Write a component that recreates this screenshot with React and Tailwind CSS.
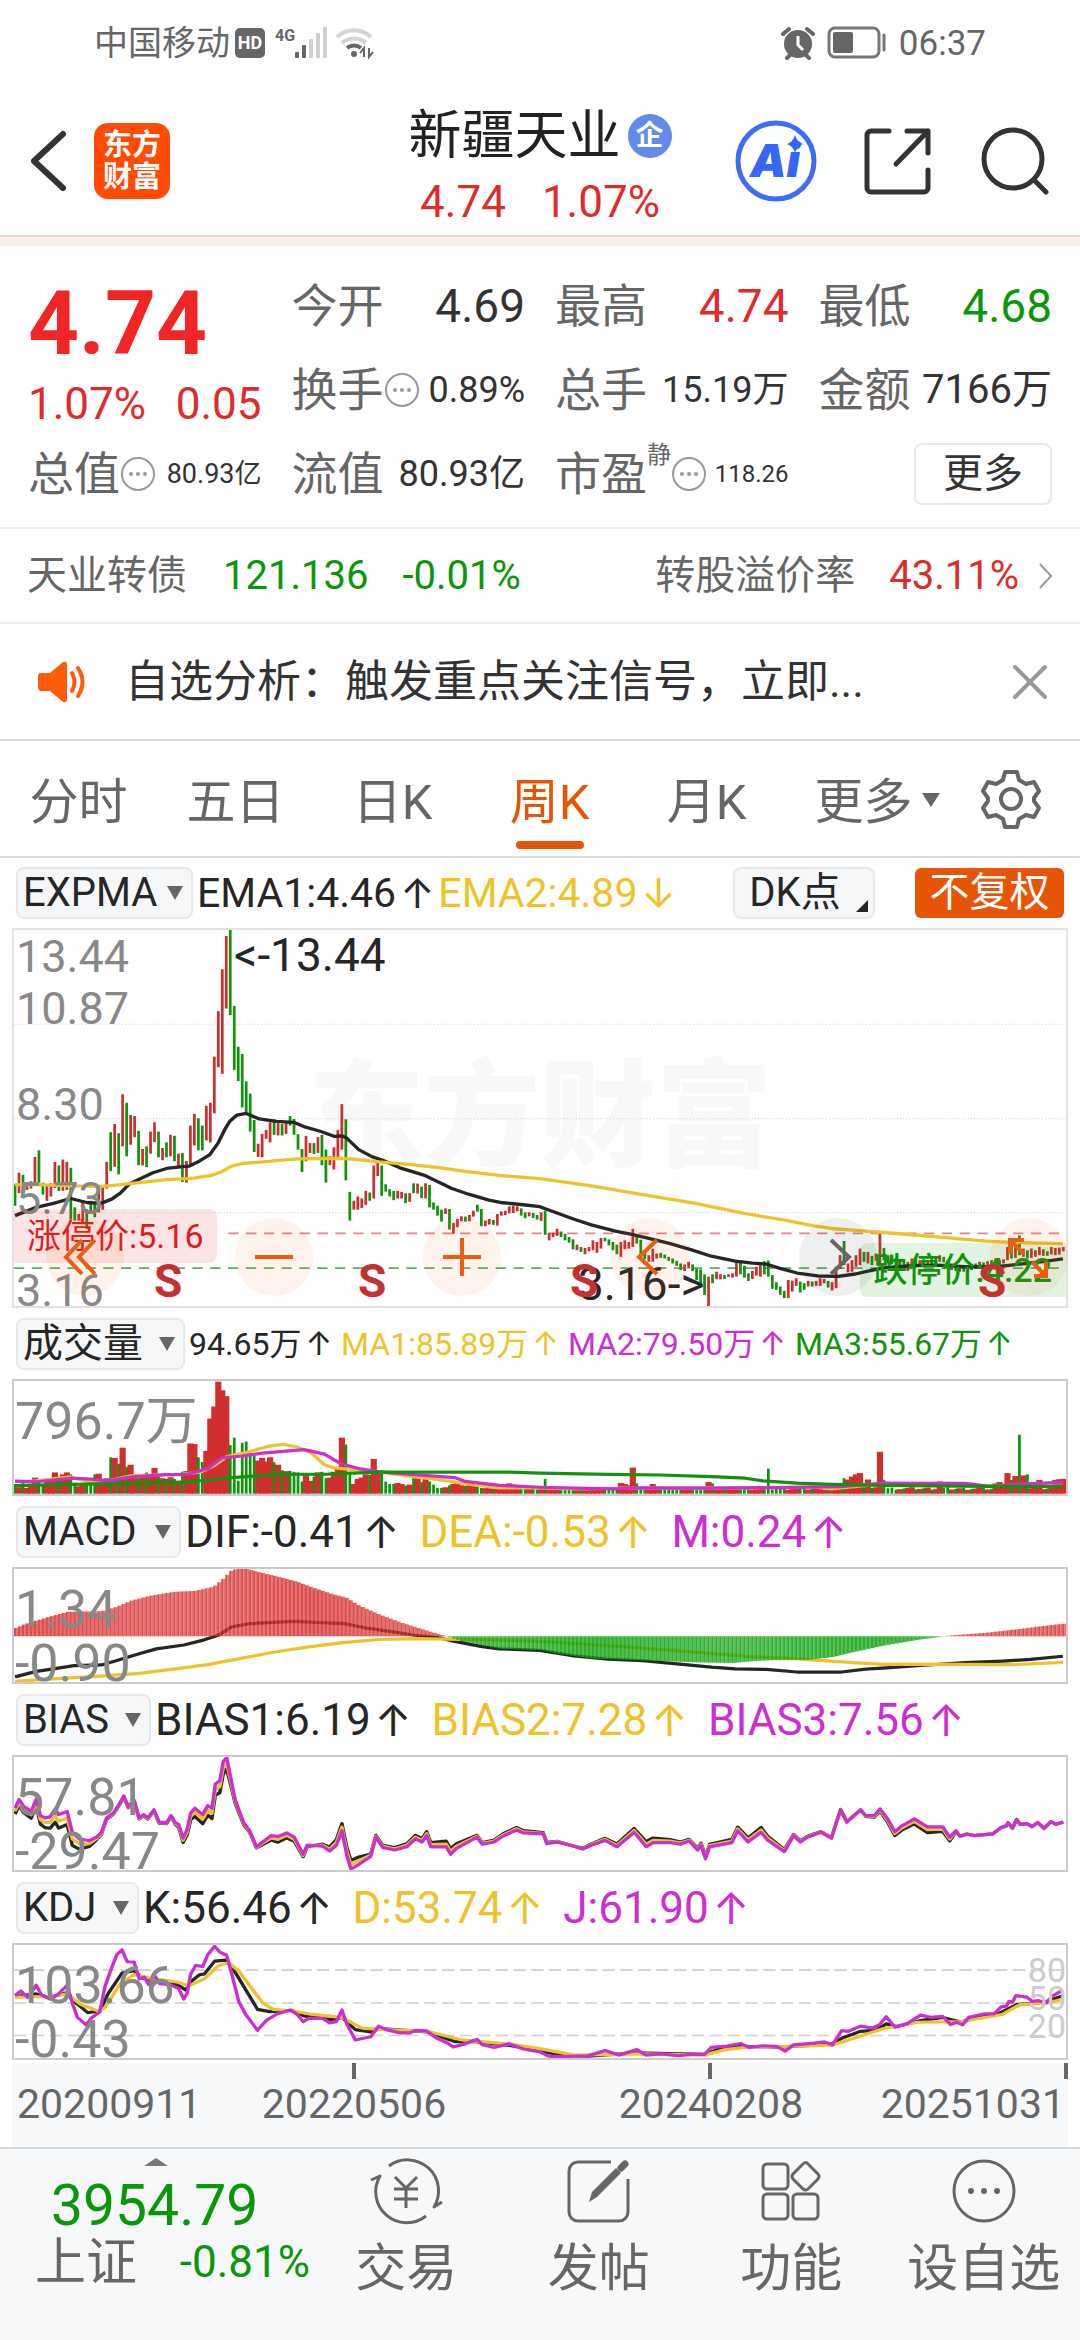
import { useState } from "react";
import clsx from "clsx";

const CANDLES = `795-860g 760-822r 766-822g 790-812r 786-808r 712-790r 692-790g 790-826g 800-845r 792-832r
727-806r 738-815g 720-815r 727-812r 745-900g 865-905g 885-905r 850-905r 870-930g 845-885g
850-895g 805-880r 800-872r 727-808r 637-755g 612-742r 640-765g 522-680r 548-710g 585-675r
588-652r 633-737g 688-738r 680-743g 635-702r 607-667r 635-713g 685-722r 668-713g 645-710r
648-725g 702-740r 700-788g 724-790r 617-735r 582-677r 595-692g 617-692g 557-662r 548-668r
408-580r 270-440r 143-460r 42-262r 24-282g 254-448g 378-482g 400-562g 483-582g 520-635g
600-697g 672-712r 642-713r 630-657r 607-668r 598-645g 610-647r 612-647g 605-642r 588-617g
597-645g 643-690g 688-758g 648-725r 670-700r 670-703g 652-700r 645-737g 690-790g 710-737r
683-750r 630-715r 552-690r 598-783g 818-905g 845-872r 832-872r 838-867r 815-857r 820-845g
738-838r 730-770r 738-830g 795-817g 810-832g 815-843g 815-838r 818-838r 822-852g 822-848r
792-822g 793-823r 802-837g 792-838r 797-865g 850-872g 860-890g 872-908g 868-885r 870-932g
912-945r 900-925r 892-907r 893-908g 888-907r 875-893r 857-878g 870-922g 905-922r 900-917r
903-918g 885-920r 877-890r 875-888r 862-883r 860-882r 862-877r 868-890g 880-898g 880-892r
882-897g 888-902g 880-906r 875-948g 942-965r 942-955r 930-952r 938-955g 945-965g 955-972g
962-992g 978-995r 985-1000g 988-1007r 985-998r 965-995r 970-1003r 958-990r 957-968g 962-980g
970-995g 978-1007g 970-1015r 965-992r 970-990r 930-985r 950-975g 963-1015g 1000-1022g 1010-1030r
990-1030r 1005-1020r 1003-1018g 1008-1020g 1015-1027g 1020-1035g 1027-1042g 1035-1055g 1038-1058r 1030-1050r
1038-1058g 1050-1085g 1053-1095g 1068-1130g 1075-1165r 1068-1095g 1060-1083r 1068-1083r 1070-1082g 1068-1076r
1065-1078r 1030-1075r 1033-1068g 1042-1078g 1065-1088g 1058-1082r 1045-1072r 1040-1075r 1028-1068g 1026-1075g
1070-1112g 1092-1115g 1105-1130g 1118-1140g 1085-1140r 1087-1120r 1080-1103r 1090-1123g 1095-1115g 1088-1105r
1090-1105g 1088-1103r 1080-1103r 1082-1095r 1088-1108g 1092-1117r 1045-1110r 1010-1052r 967-1040g 1035-1062r
1025-1060r 1010-1045r 990-1040r 1000-1030g 1000-1035r 1012-1040g 1005-1027r 943-1045r 988-1025g 1010-1035g
1012-1038g 1018-1045g 1025-1050r 1028-1055g 1030-1058r 1020-1040r 1022-1045g 1025-1045r 1022-1040g 1025-1045r
1020-1042g 1015-1035r 1010-1030r 1015-1032g 1025-1045g 1035-1055r 1040-1058g 1042-1060r 1045-1060g 1040-1055r
1038-1055g 1035-1052r 1030-1050r 1032-1048g 1028-1045r 1025-1043g 1020-1040r 1025-1040r 1022-1035r 985-1025r
980-1020g 985-1018r 950-1010g 990-1015r 995-1020g 990-1018r 995-1015r 985-1010r 992-1012r 998-1012g
985-1008r 988-1010r 987-1008r 985-998r`
  .split(/\s+/)
  .map((item) => {
    const [high, low] = item.slice(0, -1).split("-").map(Number);
    return { high, low, up: item.endsWith("r") };
  });

const VOLUMES = [
  528, 538, 525, 540, 535, 508, 515, 530, 520, 512, 492, 505, 498, 492, 498, 530, 535, 528, 520, 515,
  498, 496, 515, 510, 445, 447, 465, 415, 475, 468, 500, 510, 500, 492, 498, 478, 500, 510, 512, 507,
  512, 525, 490, 488, 402, 404, 445, 460, 425, 325, 287, 210, 237, 255, 407, 384, 518, 400, 396, 432,
  440, 455, 447, 458, 445, 460, 468, 485, 488, 487, 490, 492, 520, 500, 518, 505, 492, 490, 510, 508,
  490, 480, 384, 405, 490, 528, 512, 508, 498, 500, 450, 490, 485, 520, 528, 528, 525, 528, 533, 530,
  508, 510, 522, 503, 520, 530, 540, 540, 538, 532, 528, 525, 532, 534, 530, 533, 535, 540, 541, 541,
  543, 538, 536, 534, 526, 530, 535, 540, 543, 543, 543, 545, 542, 512,
];

// late spikes, the other weeks are almost flat
const VOLUME_SPIKES = {
  152: 525, 153: 528, 154: 532, 155: 477, 156: 526, 160: 528, 174: 522, 175: 526, 189: 480,
  208: 510, 209: 514, 210: 505, 211: 498, 212: 494, 213: 530, 214: 514, 217: 428, 218: 515,
  232: 520, 246: 526, 247: 522, 248: 530, 249: 494, 250: 515, 251: 503, 252: 375, 253: 501,
  254: 498, 257: 515, 261: 515, 262: 513, 263: 512,
};

const MACD_BARS = [
  [38, 955], [60, 945], [130, 922], [190, 905], [290, 903], [330, 890], [375, 870], [430, 855],
  [500, 843], [560, 840], [615, 827], [640, 805], [665, 778], [680, 772], [715, 772], [740, 780],
  [800, 795], [860, 812], [900, 828], [960, 850], [1000, 860], [1040, 886], [1100, 914],
  [1160, 938], [1220, 958], [1270, 974], [1295, 981], [1340, 996], [1450, 1020], [1568, 1024],
  [1618, 1035], [1718, 1050], [1868, 1056], [2018, 1062], [2128, 1064], [2188, 1058], [2268, 1054],
  [2348, 1054], [2418, 1046], [2468, 1033], [2568, 1010], [2668, 992], [2728, 983], [2758, 979],
  [2868, 970], [2968, 958], [3018, 951], [3094, 942],
];

const BIAS = [
  [38, 325], [50, 298], [62, 318], [85, 335], [100, 297], [112, 348], [125, 355], [140, 352],
  [155, 328], [165, 345], [190, 335], [205, 400], [225, 420], [255, 426], [275, 415], [290, 400],
  [305, 355], [325, 340], [340, 315], [355, 287], [368, 320], [385, 300], [400, 355], [412, 345],
  [425, 355], [443, 330], [458, 368], [480, 370], [493, 348], [505, 370], [515, 375], [528, 418],
  [540, 390], [550, 340], [562, 325], [585, 345], [600, 317], [612, 325], [622, 250], [635, 240],
  [645, 180], [655, 168], [665, 220], [680, 300], [705, 370], [722, 395], [742, 445], [760, 430],
  [785, 410], [805, 413], [830, 402], [852, 415], [878, 468], [890, 440], [935, 443], [955, 458],
  [975, 440], [991, 395], [1005, 470], [1017, 514], [1040, 500], [1075, 475], [1090, 415],
  [1110, 447], [1145, 455], [1180, 445], [1205, 420], [1225, 430], [1238, 410], [1250, 445],
  [1295, 445], [1308, 468], [1325, 450], [1385, 415], [1400, 437], [1435, 430], [1460, 412],
  [1500, 393], [1520, 402], [1578, 405], [1588, 435], [1618, 430], [1658, 440], [1693, 452],
  [1718, 440], [1758, 425], [1793, 445], [1843, 400], [1878, 445], [1898, 432], [1948, 432],
  [1978, 437], [2003, 427], [2028, 455], [2038, 440], [2051, 482], [2063, 445], [2128, 432],
  [2145, 395], [2175, 430], [2213, 400], [2233, 425], [2281, 460], [2308, 410], [2328, 430],
  [2348, 415], [2388, 400], [2418, 418], [2445, 330], [2463, 368], [2503, 330], [2518, 348],
  [2543, 348], [2560, 327], [2583, 360], [2603, 398], [2623, 380], [2660, 358], [2698, 383],
  [2743, 383], [2763, 415], [2781, 395], [2793, 412], [2813, 405], [2833, 410], [2888, 405],
  [2913, 385], [2928, 380], [2933, 370], [2946, 387], [2958, 360], [2968, 375], [2988, 373],
  [3003, 382], [3020, 370], [3038, 388], [3058, 367], [3073, 375], [3094, 368],
];

// distance of the short BIAS line from the long one
const BIAS_SPREAD = [
  [38, 18], [100, 22], [160, 42], [210, 40], [270, 10], [300, 4], [500, 3], [560, 25], [600, 30],
  [650, 40], [680, 10], [740, 3], [800, 18], [860, 12], [930, -5], [991, -22], [1017, -27],
  [1050, -22], [1080, -5], [1240, -12], [1300, -18], [1390, -5], [1500, -8], [1660, 0],
  [1843, -12], [1880, -16], [2000, -5], [2145, -11], [2213, -15], [2300, -4], [2500, 0],
  [2600, 12], [2700, 18], [2760, 13], [2790, 0], [3094, 0],
];

function interpolate(points, x) {
  const end = points.findIndex((p) => p[0] >= x);
  if (end <= 0) return points[end === 0 ? 0 : points.length - 1][1];
  const [x0, y0] = points[end - 1];
  const [x1, y1] = points[end];
  return y0 + ((y1 - y0) * (x - x0)) / (x1 - x0);
}

const barX = (i) => 38 + i * 11.62;

const biasLine = (ratio) =>
  BIAS.map(([x, y]) => `${x},${y + interpolate(BIAS_SPREAD, x) * ratio}`).join(" ");

const RED = "#cb3030";
const GREEN = "#12930f";
const YELLOW = "#eec22a";
const PURPLE = "#cb2fcf";
const BLACK = "#262626";

function Line({ points, color, width = 10 }) {
  return <polyline points={points} fill="none" stroke={color} strokeWidth={width} strokeLinejoin="round" />;
}

function Plot({ viewBox, children }) {
  return (
    <svg viewBox={viewBox} preserveAspectRatio="none" className="absolute inset-0 w-full h-full" aria-hidden="true">
      {children}
    </svg>
  );
}

function More({ size = 36 }) {
  return (
    <svg width={size} height={size} viewBox="0 0 36 36" fill="none" stroke="#999" strokeWidth="2">
      <circle cx="18" cy="18" r="16" />
      <g fill="#999" stroke="none">
        <circle cx="11" cy="18" r="2" />
        <circle cx="18" cy="18" r="2" />
        <circle cx="25" cy="18" r="2" />
      </g>
    </svg>
  );
}

function StatusBar() {
  return (
    <div className="flex items-center justify-between h-[86px] px-[94px] text-[#666]">
      <div className="flex items-center">
        <span className="text-[34px]">中国移动</span>
        <span className="ml-[5px] w-[30px] h-[30px] rounded-[5px] bg-[#666] text-white text-[18px] font-bold flex items-center justify-center">
          HD
        </span>
        <span className="ml-[10px] self-start text-[16px] leading-[20px] font-bold">4G</span>
        <svg width="34" height="32" viewBox="0 0 34 32" fill="#666">
          <rect x="0" y="25" width="4" height="6" rx="1" />
          <rect x="7" y="18" width="4" height="13" rx="1" />
          <g fill="#d0d0d0">
            <rect x="14" y="12" width="4" height="19" rx="1" />
            <rect x="21" y="6" width="4" height="25" rx="1" />
            <rect x="28" y="0" width="4" height="31" rx="1" />
          </g>
        </svg>
        <svg width="40" height="34" viewBox="0 0 40 34" fill="none" strokeWidth="4" className="ml-[6px]">
          <path d="M2 11a25 25 0 0 1 34 0" stroke="#d4d4d4" />
          <path d="M7 17a18 18 0 0 1 24 0" stroke="#d4d4d4" />
          <path d="M12 22a11 11 0 0 1 14 0" stroke="#666" />
          <circle cx="19" cy="28" r="3" fill="#666" />
          <path d="M29 31v-9l-4 5M34 22v9l4-5" stroke="#666" strokeWidth="2" />
        </svg>
      </div>
      <div className="flex items-center">
        <svg width="34" height="34" viewBox="0 0 34 34" fill="#666">
          <ellipse cx="17" cy="18" rx="14" ry="14" />
          <path d="M2 8l6-5M32 8l-6-5M6 32l4-4M28 32l-4-4" stroke="#666" strokeWidth="4" strokeLinecap="round" />
          <path d="M17 10v9l5 5" stroke="#fff" strokeWidth="3" fill="none" />
        </svg>
        <svg width="60" height="34" viewBox="0 0 60 34" fill="none" className="ml-3">
          <rect x="2" y="2" width="50" height="29" rx="6" stroke="#777" strokeWidth="3" />
          <rect x="6" y="6" width="20" height="21" rx="2" fill="#666" />
          <path d="M57 9v15" stroke="#777" strokeWidth="3" strokeLinecap="round" />
        </svg>
        <span className="ml-3 text-[35px]">06:37</span>
      </div>
    </div>
  );
}

function Header() {
  return (
    <header className="grid grid-cols-[1fr_auto_1fr] h-[151px] border-b-2 border-[#dadada]">
      <div className="flex items-center pl-[29px]">
        <button aria-label="返回">
          <svg width="38" height="64" viewBox="0 0 38 64" fill="none" stroke="#333" strokeWidth="6" strokeLinecap="round" strokeLinejoin="round">
            <path d="M34 5L5 32l29 27" />
          </svg>
        </button>
        <div className="ml-[27px] w-[76px] h-[76px] rounded-[14px] bg-[#ff4b05] text-white text-[29px] leading-[32px] font-bold text-center pt-[6px]">
          东方
          <br />
          财富
        </div>
      </div>
      <div className="flex flex-col items-center pt-[16px]">
        <h1 className="flex items-center h-[68px] text-[53px] text-[#222]">
          新疆天业
          <span className="ml-[7px] w-[44px] h-[44px] rounded-full bg-[#628bea] text-white text-[28px] font-bold flex items-center justify-center">
            企
          </span>
        </h1>
        <p className="flex items-center h-[64px] gap-[36px] text-[44px] text-[#dc2c2c]">
          <span>4.74</span>
          <span>1.07%</span>
        </p>
      </div>
      <div className="flex items-center justify-end gap-[46px] pr-[31px]">
        <button aria-label="Ai">
          <svg width="82" height="82" viewBox="0 0 82 82" fill="none">
            <circle cx="41" cy="41" r="38" stroke="#3f6cf5" strokeWidth="5" />
            <text x="40" y="57" textAnchor="middle" className="font-[Inter] text-[46px] font-black italic" fill="#3566f8">
              Ai
            </text>
            <path d="M60 15q2 7 8 9q-6 2-8 9q-2-7-8-9q6-2 8-9z" fill="#3566f8" />
          </svg>
        </button>
        <button aria-label="分享">
          <svg width="70" height="70" viewBox="0 0 70 70" fill="none" stroke="#333" strokeWidth="5" strokeLinecap="round" strokeLinejoin="round">
            <path d="M26 5H8a4 4 0 0 0-4 4v53a4 4 0 0 0 4 4h53a4 4 0 0 0 4-4V44M44 5h21v22M65 5L33 38" />
          </svg>
        </button>
        <button aria-label="搜索">
          <svg width="70" height="70" viewBox="0 0 70 70" fill="none" stroke="#333" strokeWidth="5" strokeLinecap="round">
            <circle cx="34" cy="33" r="29" />
            <path d="M55 54l12 12" />
          </svg>
        </button>
      </div>
    </header>
  );
}

function Stat({ label, value, valueClass, note, sup }) {
  return (
    <div className="flex items-center justify-between whitespace-nowrap">
      <span className="flex items-center text-[46px] text-[#666]">
        {label}
        {sup && <sup className="self-start text-[24px] leading-[24px] top-0 -mt-2">{sup}</sup>}
        {note && <More />}
      </span>
      <span className={valueClass}>{value}</span>
    </div>
  );
}

function Stats() {
  return (
    <section className="grid grid-cols-4 auto-rows-[84px] gap-x-[30px] px-[28px] pt-[18px] pb-[11px] border-t-[9px] border-t-[#fceee6] border-b-2 border-b-[#eee]">
      <div className="row-span-2 flex flex-col justify-end">
        <strong className="flex items-center h-[106px] text-[89px] text-[#f12525]">4.74</strong>
        <div className="flex items-center justify-between h-[56px] text-[44px] text-[#dc2c2c]">
          <span>1.07%</span>
          <span>0.05</span>
        </div>
      </div>
      <Stat label="今开" value="4.69" valueClass="text-[46px] text-[#333]" />
      <Stat label="最高" value="4.74" valueClass="text-[46px] text-[#dc2c2c]" />
      <Stat label="最低" value="4.68" valueClass="text-[46px] text-[#0a960a]" />
      <Stat label="换手" note value="0.89%" valueClass="text-[36px] text-[#333]" />
      <Stat label="总手" value="15.19万" valueClass="text-[36px] text-[#333]" />
      <Stat label="金额" value="7166万" valueClass="text-[40px] text-[#333]" />
      <Stat label="总值" note value="80.93亿" valueClass="text-[27px] text-[#333]" />
      <Stat label="流值" value="80.93亿" valueClass="text-[36px] text-[#333]" />
      <Stat label="市盈" sup="静" note value="118.26" valueClass="text-[24px] text-[#333]" />
      <div className="flex items-center justify-end">
        <button className="w-[138px] h-[62px] rounded-lg border-2 border-[#e8e8e8] text-[40px] leading-[56px] text-[#333]">
          更多
        </button>
      </div>
    </section>
  );
}

function BondRow() {
  return (
    <a href="#bond" className="flex items-center h-[95px] px-[27px] text-[40px] text-[#666] border-b-2 border-[#eee]">
      天业转债
      <span className="ml-[36px] text-[#0a960a]">121.136</span>
      <span className="ml-[34px] text-[#0a960a]">-0.01%</span>
      <span className="ml-auto">转股溢价率</span>
      <span className="ml-[34px] text-[#dc2c2c]">43.11%</span>
      <svg width="14" height="26" viewBox="0 0 14 26" fill="none" stroke="#999" strokeWidth="2" className="ml-[20px]">
        <path d="M1 1l11 12L1 25" />
      </svg>
    </a>
  );
}

function Notice() {
  return (
    <div className="flex items-center h-[117px] pl-[38px] pr-[32px] border-b-2 border-[#dcdcdc]">
      <svg width="52" height="42" viewBox="0 0 52 42" fill="#ff5a0a">
        <path d="M3 12h9L25 1q4-1 4 3v34q0 4-4 3L12 30H3q-3-1-3-4V15q0-3 3-3z" />
        <path d="M34 12q5 9 0 18M40 7q9 14 0 28" fill="none" stroke="#ff5a0a" strokeWidth="4" strokeLinecap="round" />
      </svg>
      <p className="ml-[35px] text-[44px] text-[#333]">自选分析：触发重点关注信号，立即...</p>
      <button aria-label="关闭" className="ml-auto">
        <svg width="36" height="36" viewBox="0 0 36 36" stroke="#999" strokeWidth="4" strokeLinecap="round">
          <path d="M3 3l30 30M33 3L3 33" />
        </svg>
      </button>
    </div>
  );
}

function Tabs() {
  const [active, setActive] = useState("周K");

  return (
    <nav className="flex h-[117px] border-b-2 border-[#dcdcdc]">
      {["分时", "五日", "日K", "周K", "月K", "更多"].map((tab) => (
        <button
          key={tab}
          onClick={() => setActive(tab)}
          className={clsx(
            "relative flex-1 flex items-center justify-center pt-2 text-[49px]",
            tab === active ? "text-[#e65505]" : "text-[#666]"
          )}
        >
          {tab}
          {tab === "更多" && (
            <svg width="18" height="14" viewBox="0 0 18 14" fill="#666" className="absolute right-[2px] top-[52px]">
              <path d="M0 0h18l-9 14z" />
            </svg>
          )}
          {tab === active && <span className="absolute bottom-[7px] w-[68px] h-[8px] rounded-full bg-[#e65505]" />}
        </button>
      ))}
      <button aria-label="设置" className="w-[138px] flex items-center justify-center">
        <svg width="60" height="60" viewBox="0 0 60 60" fill="none" stroke="#666" strokeWidth="4" strokeLinejoin="round">
          <path d="M24 3h12l2 8 7 4 8-2 5 9-5 7v3l5 7-5 9-8-2-7 4-2 8H24l-2-8-7-4-8 2-5-9 5-7v-3l-5-7 5-9 8 2 7-4z" />
          <circle cx="30" cy="30" r="10" />
        </svg>
      </button>
    </nav>
  );
}

function IndicatorSelect({ options, className }) {
  return (
    <div className={clsx("relative shrink-0 h-[52px]", className)}>
      <select
        aria-label="指标"
        className="appearance-none w-full h-full pl-[5px] rounded-lg border-2 border-[#e6e8ea] bg-[#f6f7f9] text-[40px] leading-[48px] text-[#262626]"
      >
        {options.map((option) => (
          <option key={option}>{option}</option>
        ))}
      </select>
      <svg width="16" height="14" viewBox="0 0 16 14" fill="#666" className="absolute right-[10px] top-[19px]">
        <path d="M0 0h16L8 14z" />
      </svg>
    </div>
  );
}

function Value({ children, down, className }) {
  return (
    <span className={clsx("flex items-center gap-1 whitespace-nowrap", className)}>
      {children}
      <span className="font-[Inter]">{down ? "↓" : "↑"}</span>
    </span>
  );
}

function PriceChart() {
  return (
    <div className="relative mx-[12px] h-[380px] border-2 border-[#e2e2e2] text-[45px] leading-[52px]">
      <div className="absolute inset-x-0 top-[112px] text-center text-[116px] leading-[150px] font-black text-[#f8f8f8]">
        东方财富
      </div>
      <Plot viewBox="35 24 3067 1140">
        <g stroke="#ccc" strokeWidth="3" strokeDasharray="3 6">
          <path d="M35 310H3102M35 596H3102M35 881H3102" />
        </g>
        <path d="M660 944H3102" stroke="#e08585" strokeWidth="5" strokeDasharray="30 22" />
        <path d="M35 1049H3102" stroke="#5fae5f" strokeWidth="5" strokeDasharray="30 22" />
        {CANDLES.map((c, i) => (
          <rect key={i} x={barX(i) - 4} y={c.high} width="8" height={c.low - c.high} fill={c.up ? RED : GREEN} />
        ))}
        <Line
          color={BLACK}
          points="38,890 100,865 150,853 200,838 250,851 290,852 320,840 345,822 370,795 400,780 440,760 480,747 520,742 545,740 575,725 605,706 630,670 650,628 665,603 685,585 712,580 750,597 800,604 850,607 880,620 930,635 970,650 990,648 1005,655 1040,690 1080,712 1110,722 1160,745 1230,767 1310,807 1360,825 1420,843 1460,851 1520,857 1568,863 1618,882 1668,901 1718,918 1788,937 1836,947 1898,962 1948,975 2008,993 2068,1013 2138,1028 2188,1034 2228,1037 2268,1050 2318,1064 2378,1073 2438,1074 2488,1067 2538,1055 2578,1048 2648,1042 2728,1040 2808,1045 2898,1045 2968,1037 3028,1030 3093,1021"
        />
        <Line
          color={YELLOW}
          points="38,796 100,796 200,800 290,801 340,797 400,790 480,781 560,776 610,768 640,757 670,740 700,732 760,727 860,718 990,716 1040,720 1100,727 1200,736 1280,745 1350,756 1450,768 1568,778 1718,800 1868,826 2018,852 2168,884 2268,901 2368,921 2418,929 2518,937 2618,945 2768,958 2868,967 2948,971 3093,975"
        />
      </Plot>

      <div className="absolute left-[2px] top-0 text-[#888]">
        <div className="absolute top-[1px]">13.44</div>
        <div className="absolute top-[53px]">10.87</div>
        <div className="absolute top-[149px]">8.30</div>
        <div className="absolute top-[243px]">5.73</div>
        <div className="absolute top-[335px]">3.16</div>
      </div>
      <span className="absolute left-[220px] top-[-1px] text-[46px] text-[#262626]">&lt;-13.44</span>
      <div className="absolute left-0 top-[279px] h-[54px] px-[13px] rounded-r-lg bg-[#f01e1e]/12 text-[34px] leading-[54px] text-[#dc2020]">
        涨停价:5.16
      </div>
      <div className="absolute right-0 top-[313px] h-[54px] px-[14px] rounded-l-lg bg-[#12a012]/12 text-[34px] leading-[54px] text-[#12930f] font-medium">
        跌停价:4.22
      </div>
      <span className="absolute left-[564px] top-[328px] text-[46px] text-[#262626]">3.16-&gt;</span>
      <div className="font-bold text-[46px] text-[#c53030]">
        <span className="absolute left-[140px] top-[325px]">S</span>
        <span className="absolute left-[344px] top-[325px]">S</span>
        <span className="absolute left-[556px] top-[325px]">S</span>
        <span className="absolute left-[964px] top-[325px]">S</span>
      </div>
      <ChartTools />
    </div>
  );
}

const TOOLS = [
  { label: "最早", d: "M36 22L20 39l16 17M49 22L33 39l16 17", place: "left-[32px]" },
  { label: "缩小", d: "M20 39h38", place: "left-[221px]" },
  { label: "放大", d: "M20 39h38M39 20v38", place: "left-[409px]" },
  { label: "后退", d: "M46 22L28 39l18 17", place: "left-[597px]" },
  { label: "前进", d: "M32 22l18 17-18 17", place: "left-[785px]", off: true },
  { label: "全屏", d: "M20 36V22h14M21 23l13 13M44 58h12V44M55 57L42 44", place: "left-[976px]" },
];

function ChartTools() {
  return TOOLS.map((tool) => (
    <button
      key={tool.label}
      aria-label={tool.label}
      className={clsx(
        "absolute top-[288px] w-[78px] h-[78px] rounded-full",
        tool.off ? "bg-[#333]/8" : "bg-[#ff5a0a]/8",
        tool.place
      )}
    >
      <svg viewBox="0 0 78 78" fill="none" stroke={tool.off ? "#666" : "#e8600f"} strokeWidth="4">
        <path d={tool.d} />
      </svg>
    </button>
  ));
}

function Panel({ options, selectClass, values, valueClass, labels, viewBox, children }) {
  return (
    <section>
      <div className="flex items-center h-[71px] pl-[16px]">
        <IndicatorSelect options={options} className={selectClass} />
        <div className={clsx("flex pl-[4px]", valueClass)}>{values}</div>
      </div>
      <div className="relative mx-[12px] h-[117px] border-2 border-[#ccc]">
        <Plot viewBox={viewBox}>{children}</Plot>
        <div className="absolute left-[1px] top-[14px] text-[52px] leading-[54px] text-[#888]">
          {labels.map((label) => (
            <div key={label}>{label}</div>
          ))}
        </div>
      </div>
    </section>
  );
}

function VolumePanel() {
  return (
    <Panel
      options={["成交量", "成交额"]}
      selectClass="w-[169px]"
      valueClass="gap-[9px] text-[32px]"
      values={
        <>
          <Value className="text-[#262626]">94.65万</Value>
          <Value className="text-[#eec22a]">MA1:85.89万</Value>
          <Value className="text-[#cb2fcf]">MA2:79.50万</Value>
          <Value className="text-[#12930f]">MA3:55.67万</Value>
        </>
      }
      labels={["796.7万"]}
      viewBox="35 208 3067 351"
    >
      {CANDLES.map((c, i) => {
        const top = VOLUMES[i] ?? VOLUME_SPIKES[i] ?? 538 + ((i * 7) % 9);
        const width = c.up ? 18 : 8;
        return (
          <rect key={i} x={barX(i) - width / 2} y={top} width={width} height={558 - top} fill={c.up ? "#d02f2f" : GREEN} />
        );
      })}
      <Line
        color={YELLOW}
        points="38,521 100,518 200,506 250,520 310,518 380,502 440,500 520,499 580,490 620,470 655,443 720,428 780,410 820,405 860,413 900,430 940,468 970,478 1040,485 1100,490 1200,505 1290,517 1370,530 1450,540 1568,540 1668,543 1818,541 1968,541 2168,540 2368,537 2418,543 2468,538 2568,528 2768,526 2868,535 2968,530 3093,524"
      />
      <Line
        color={PURPLE}
        points="38,519 100,521 200,510 260,513 310,518 380,506 480,499 540,498 600,480 640,447 700,441 760,432 880,421 940,435 990,466 1040,480 1100,490 1200,499 1320,508 1350,520 1450,532 1568,538 1668,541 1788,543 1848,540 2068,541 2268,539 2448,536 2568,525 2668,526 2808,526 2878,535 2968,528 3093,523"
      />
      <Line
        color={GREEN}
        points="38,533 200,529 400,525 550,521 650,510 720,504 800,498 950,497 1100,491 1480,491 1568,494 1768,498 1918,500 2068,505 2168,510 2218,518 2318,525 2418,529 2568,532 2868,535 3093,536"
      />
    </Panel>
  );
}

function MacdPanel() {
  return (
    <Panel
      options={["MACD", "DMI"]}
      selectClass="w-[165px]"
      valueClass="gap-[20px] text-[44px]"
      values={
        <>
          <Value className="text-[#262626]">DIF:-0.41</Value>
          <Value className="text-[#eec22a]">DEA:-0.53</Value>
          <Value className="text-[#cb2fcf]">M:0.24</Value>
        </>
      }
      labels={["1.34", "-0.90"]}
      viewBox="35 772 3067 351"
    >
      <Line
        color={BLACK}
        points="38,1107 100,1090 150,1082 210,1072 290,1070 330,1058 400,1035 450,1020 530,1008 590,992 630,978 670,952 720,942 850,935 1000,942 1060,955 1130,966 1200,977 1280,987 1320,997 1400,1013 1450,1020 1568,1025 1668,1042 1768,1052 1868,1057 1968,1067 2068,1077 2138,1082 2228,1084 2318,1092 2448,1092 2518,1083 2578,1079 2688,1071 2808,1063 2918,1058 2998,1053 3093,1043"
      />
      <Line
        color={YELLOW}
        points="38,1121 150,1113 300,1104 400,1096 500,1083 600,1069 700,1049 800,1029 900,1013 1000,1000 1100,991 1200,988 1300,990 1450,993 1568,997 1668,1003 1868,1018 2018,1030 2168,1043 2318,1051 2438,1060 2568,1068 2768,1068 2948,1069 3093,1062"
      />
      {CANDLES.map((_, i) => {
        const y = interpolate(MACD_BARS, barX(i));
        const up = y < 981;
        const box = { y: Math.min(y, 981), height: Math.abs(y - 981) };
        return (
          <g key={i} fill={up ? "#c02a2a" : "#0f900f"} fillOpacity="0.8">
            <rect x={barX(i) - 3} width="6" {...box} />
            <rect x={barX(i) + 3} width="6" {...box} fill={up ? "#f04545" : "#18b818"} />
          </g>
        );
      })}
    </Panel>
  );
}

function BiasPanel() {
  return (
    <Panel
      options={["BIAS", "RSI"]}
      selectClass="w-[135px]"
      valueClass="gap-[20px] text-[44px]"
      values={
        <>
          <Value className="text-[#262626]">BIAS1:6.19</Value>
          <Value className="text-[#eec22a]">BIAS2:7.28</Value>
          <Value className="text-[#cb2fcf]">BIAS3:7.56</Value>
        </>
      }
      labels={["57.81", "-29.47"]}
      viewBox="35 166 3067 351"
    >
      <Line color={BLACK} points={biasLine(1)} />
      <Line color={YELLOW} points={biasLine(0.5)} />
      <Line color={PURPLE} points={biasLine(0)} />
    </Panel>
  );
}

function KdjPanel() {
  return (
    <div className="relative">
      <Panel
        options={["KDJ", "WR"]}
        selectClass="w-[123px]"
        valueClass="gap-[20px] text-[44px]"
        values={
          <>
            <Value className="text-[#262626]">K:56.46</Value>
            <Value className="text-[#eec22a]">D:53.74</Value>
            <Value className="text-[#cb2fcf]">J:61.90</Value>
          </>
        }
        labels={["103.66", "-0.43"]}
        viewBox="35 730 3067 351"
      >
        <path d="M35 808H3102M35 910H3102M35 1011H3102" stroke="#d0d0d0" strokeWidth="5" strokeDasharray="36 16" />
        <Line
          color={BLACK}
          points="38,890 100,882 140,893 190,878 210,905 250,940 285,935 310,880 350,817 385,810 410,832 490,848 515,855 535,870 555,840 575,823 590,820 620,780 655,777 680,815 745,930 780,937 845,933 880,950 960,962 991,955 1030,993 1075,1000 1100,990 1240,1000 1320,1030 1380,1030 1480,1042 1568,1058 1628,1072 1708,1075 1848,1065 2048,1070 2088,1054 2158,1045 2268,1047 2418,1038 2448,1020 2503,998 2548,995 2578,975 2608,983 2678,965 2743,955 2798,970 2823,958 2908,942 2958,915 3038,908 3093,888"
        />
        <Line
          color={YELLOW}
          points="38,892 140,890 190,882 230,915 280,935 300,925 345,850 385,822 440,835 510,845 545,857 590,835 630,795 660,785 690,810 760,910 790,930 850,935 900,945 990,955 1050,988 1100,992 1240,998 1340,1025 1480,1038 1568,1052 1668,1072 1868,1068 2048,1072 2108,1055 2168,1048 2418,1042 2468,1025 2568,990 2668,970 2798,968 2918,945 2968,915 3048,910 3093,898"
        />
        <Line
          color={PURPLE}
          points="38,887 55,873 75,893 100,855 115,885 140,898 165,882 190,855 205,910 220,955 245,978 262,955 285,938 300,860 320,800 335,760 350,745 365,782 385,783 400,835 415,830 427,852 445,825 460,850 490,853 515,865 530,898 540,880 550,820 565,793 585,797 600,760 620,734 635,752 655,762 670,820 690,905 710,945 745,995 770,965 800,945 840,932 860,945 878,968 895,958 935,958 955,972 975,968 991,932 1005,975 1030,1025 1075,1015 1098,982 1120,993 1160,1003 1190,1003 1205,995 1238,997 1265,1018 1300,1035 1315,1047 1350,1037 1385,1023 1400,1040 1435,1048 1478,1037 1520,1053 1568,1062 1593,1075 1628,1077 1708,1074 1758,1058 1798,1072 1851,1055 1878,1072 1918,1068 1973,1074 2008,1070 2048,1070 2068,1048 2113,1044 2153,1036 2178,1048 2218,1043 2258,1045 2283,1060 2308,1040 2368,1035 2398,1031 2421,1040 2448,996 2468,998 2503,982 2538,988 2558,978 2578,953 2603,985 2638,975 2678,948 2708,955 2743,952 2765,977 2783,970 2801,978 2818,955 2858,945 2893,943 2913,922 2928,920 2936,905 2946,908 2956,887 2988,892 3003,905 3023,903 3045,909 3063,888 3093,870"
        />
      </Panel>
      <div className="absolute right-[14px] top-[84px] text-[34px] leading-[28px] text-[#ccc]">
        <div>80</div>
        <div>50</div>
        <div>20</div>
      </div>
    </div>
  );
}

function DateAxis() {
  return (
    <div className="relative mx-[12px] mt-[3px] h-[84px] bg-[#f7f8fa] text-[41px] leading-[82px] text-[#666]">
      <span className="absolute left-[5px]">20200911</span>
      <span className="absolute left-1/3 -translate-x-1/2 -ml-[10px]">20220506</span>
      <span className="absolute left-2/3 -translate-x-1/2 -ml-[5px]">20240208</span>
      <span className="absolute right-[3px]">20251031</span>
      <i className="absolute left-[340px] top-0 w-1 h-4 bg-[#666]" />
      <i className="absolute left-[696px] top-0 w-1 h-4 bg-[#666]" />
      <i className="absolute right-0 top-0 w-1 h-4 bg-[#666]" />
    </div>
  );
}

const ACTIONS = [
  {
    label: "交易",
    icon: (
      <>
        <path d="M21 9A31 31 0 0 1 66 50l8-5M58 59A31 31 0 0 1 12 19l-9 4" />
        <path d="M27 20l11 11 11-11M38 31v20M26 32h24M26 42h24" />
      </>
    ),
  },
  {
    label: "发帖",
    icon: (
      <>
        <path d="M50 5H17a9 9 0 0 0-9 9v41a9 9 0 0 0 9 9h41a9 9 0 0 0 9-9V22" />
        <path d="M28 45l3-10 24-24 5 5-24 24z" fill="#666" stroke="none" />
        <path d="M60 11l4-4" strokeWidth="7" strokeLinecap="round" />
      </>
    ),
  },
  {
    label: "功能",
    icon: (
      <>
        <rect x="10" y="7" width="25" height="25" rx="4" />
        <rect x="10" y="37" width="25" height="25" rx="4" />
        <rect x="40" y="37" width="25" height="25" rx="4" />
        <path d="M50 7q3-3 5 0l10 10q2 2 0 5L55 32q-2 2-5 0L40 22q-2-3 0-5z" />
      </>
    ),
  },
  {
    label: "设自选",
    icon: (
      <>
        <circle cx="38" cy="34" r="30" />
        <g fill="#666" stroke="none">
          <circle cx="25" cy="34" r="3" />
          <circle cx="38" cy="34" r="3" />
          <circle cx="51" cy="34" r="3" />
        </g>
      </>
    ),
  },
];

function BottomBar() {
  return (
    <footer className="flex h-[193px] border-t-2 border-[#d5d8db] bg-[#f7f8fa] text-[#666]">
      <button className="relative w-[310px] flex flex-col items-start pt-[29px]">
        <svg width="24" height="8" viewBox="0 0 24 8" fill="#777" className="absolute left-[144px] top-[9px]">
          <path d="M12 0l12 8H0z" />
        </svg>
        <span className="pl-[51px] text-[57px] leading-[56px] text-[#0a960a]">3954.79</span>
        <span className="flex items-center justify-between w-full h-[56px] pl-[35px] text-[51px]">
          上证
          <span className="text-[44px] text-[#0a960a]">-0.81%</span>
        </span>
      </button>
      {ACTIONS.map((action) => (
        <button key={action.label} className="flex-1 flex flex-col items-center pt-[8px] text-[51px] leading-[88px] whitespace-nowrap">
          <svg width="76" height="68" viewBox="0 0 76 68" fill="none" stroke="#666" strokeWidth="3" strokeLinejoin="round">
            {action.icon}
          </svg>
          <span>{action.label}</span>
        </button>
      ))}
    </footer>
  );
}

export default function App() {
  return (
    <main className="bg-white font-[Roboto,'Noto_Sans_CJK_SC',sans-serif] leading-none overflow-hidden" lang="zh-CN">
      <StatusBar />
      <Header />
      <Stats />
      <BondRow />
      <Notice />
      <Tabs />
      <div className="flex items-center h-[70px] px-[16px]">
        <IndicatorSelect options={["EXPMA", "MA", "BOLL"]} className="w-[177px]" />
        <div className="flex gap-[4px] pl-[4px] text-[41px]">
          <Value className="text-[#262626]">EMA1:4.46</Value>
          <Value className="text-[#eec22a]" down>
            EMA2:4.89
          </Value>
        </div>
        <button className="relative ml-auto w-[142px] h-[52px] pr-[18px] rounded-lg border-2 border-[#e6e8ea] bg-[#f6f7f9] text-[40px] text-[#262626]">
          DK点
          <svg width="12" height="12" viewBox="0 0 12 12" className="absolute right-[5px] bottom-[5px]">
            <path d="M12 0v12H0z" fill="#262626" />
          </svg>
        </button>
        <button className="ml-[40px] w-[149px] h-[50px] rounded-md bg-[#e65505] text-[40px] text-white">不复权</button>
      </div>
      <PriceChart />
      <VolumePanel />
      <MacdPanel />
      <BiasPanel />
      <KdjPanel />
      <DateAxis />
      <BottomBar />
    </main>
  );
}
